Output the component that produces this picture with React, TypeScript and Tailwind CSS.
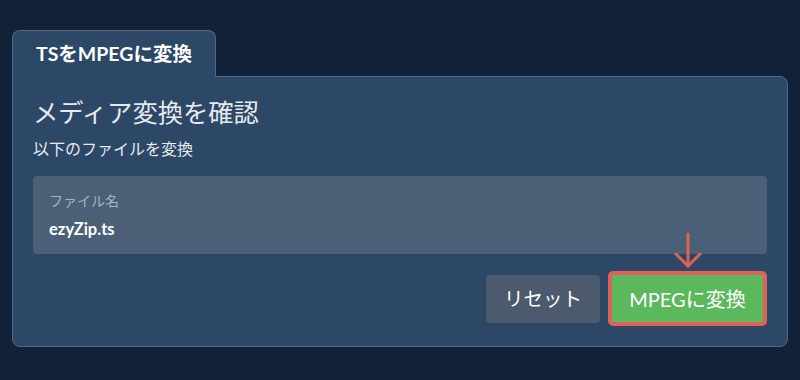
import React from "react";

export default function App() {
  return (
    <div
      className="w-[800px] h-[380px] bg-[#112238] pt-[30px] px-[12px]"
      style={{ fontFamily: 'Lato, "Noto Sans CJK JP", sans-serif' }}
    >
      {/* Tab */}
      <div className="relative z-10 -mb-px w-[204px] h-[47px] bg-[#2c4866] border border-b-0 border-[#4f6887] rounded-t-lg flex items-center pl-[23px]">
        <span className="text-[19.5px] font-bold text-white">TSをMPEGに変換</span>
      </div>

      {/* Panel */}
      <div className="relative w-[776px] bg-[#2c4866] border border-[#4f6887] rounded-b-lg rounded-tr-lg px-[20px] pt-[17px] pb-[20px]">
        <h1 className="text-[25.3px] leading-[36px] text-[#e6eaef]">メディア変換を確認</h1>
        <p className="text-[16px] leading-[24px] text-[#e6eaef] mt-[7px]">以下のファイルを変換</p>

        <div className="mt-[15px] h-[78px] bg-[#4b6077] rounded-[4px] px-[16px] pt-[15px]">
          <div className="text-[14px] leading-[20px] text-[#a7b2c0]">ファイル名</div>
          <div className="mt-[7px] text-[16.5px] leading-[22px] font-bold text-white">ezyZip.ts</div>
        </div>

        <div className="mt-[17px] flex justify-end items-center gap-[8px]">
          <button className="w-[114px] h-[48px] bg-[#4b5a6c] rounded-[4px] text-[19.5px] text-white">
            リセット
          </button>
          <div className="relative">
            <svg
              className="absolute left-1/2 -translate-x-1/2 -top-[39px]"
              width="32"
              height="38"
              viewBox="0 0 32 38"
              fill="none"
              stroke="#e0605a"
              strokeWidth="3"
              strokeLinecap="round"
              strokeLinejoin="round"
            >
              <line x1="16" y1="2" x2="16" y2="34" />
              <polyline points="4,22 16,34 28,22" />
            </svg>
            <button className="w-[159px] h-[55px] bg-[#5cb85c] border-4 border-[#e0605a] rounded-[5px] text-[20px] text-white">
              MPEGに変換
            </button>
          </div>
        </div>
      </div>
    </div>
  );
}
